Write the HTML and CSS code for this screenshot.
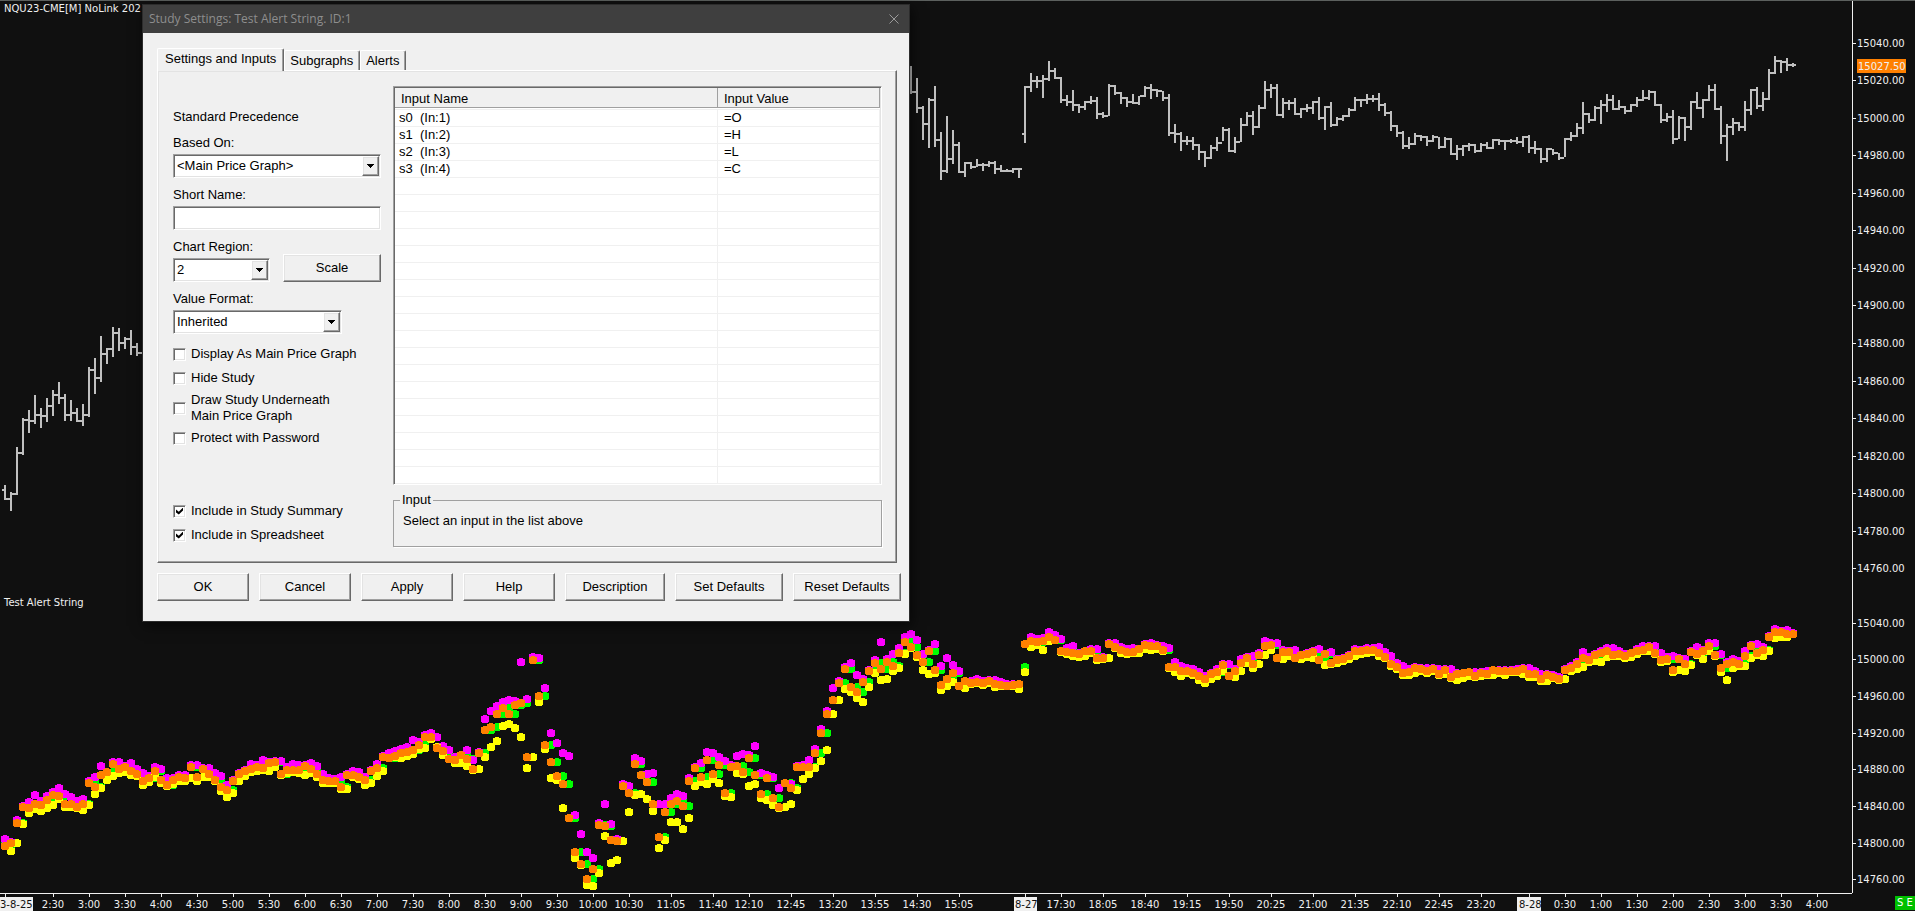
FILE: index.html
```html
<!DOCTYPE html>
<html lang="en">
<head>
<meta charset="utf-8">
<title>Study Settings</title>
<link rel="stylesheet" href="styles.css">
</head>
<body>
<main class="chart">
  <svg class="plot" id="plot" aria-label="Price and study chart"></svg>
  <svg class="price-axis" id="price-axis" aria-label="Price scale"></svg>
  <svg class="time-axis" id="time-axis" aria-label="Time scale"></svg>
  <div class="corner"><span class="status">S E</span></div>
</main>

<section class="dialog" role="dialog" aria-labelledby="dialog-title">
  <header class="titlebar">
    <h1 class="title" id="dialog-title">Study Settings: Test Alert String. ID:1</h1>
    <button class="close" type="button" aria-label="Close">
      <svg width="10" height="10" viewBox="0 0 10 10"><path d="M0.5 0.5 9.5 9.5M9.5 0.5 0.5 9.5" fill="none" stroke="#9a9a9a"/></svg>
    </button>
  </header>
  <form class="body">
    <div class="tabs" role="tablist">
      <button class="tab active" type="button" role="tab" aria-selected="true">Settings and Inputs</button>
      <button class="tab" type="button" role="tab" aria-selected="false">Subgraphs</button>
      <button class="tab" type="button" role="tab" aria-selected="false">Alerts</button>
    </div>
    <div class="panel" role="tabpanel">
      <div class="options">
        <p class="heading">Standard Precedence</p>
        <div class="field">
          <label for="based">Based On:</label>
          <div class="select"><select id="based"><option>&lt;Main Price Graph&gt;</option></select><span class="arrow"><svg width="7" height="4" viewBox="0 0 7 4" shape-rendering="crispEdges"><path d="M0 0h7v1H0zM1 1h5v1H1zM2 2h3v1H2zM3 3h1v1H3z"/></svg></span></div>
        </div>
        <div class="field">
          <label for="short">Short Name:</label>
          <input class="textbox" id="short" type="text">
        </div>
        <div class="field-row">
          <div class="field region">
            <label for="region">Chart Region:</label>
            <div class="select"><select id="region"><option>2</option></select><span class="arrow"><svg width="7" height="4" viewBox="0 0 7 4" shape-rendering="crispEdges"><path d="M0 0h7v1H0zM1 1h5v1H1zM2 2h3v1H2zM3 3h1v1H3z"/></svg></span></div>
          </div>
          <button class="button scale" type="button">Scale</button>
        </div>
        <div class="field format">
          <label for="format">Value Format:</label>
          <div class="select"><select id="format"><option>Inherited</option></select><span class="arrow"><svg width="7" height="4" viewBox="0 0 7 4" shape-rendering="crispEdges"><path d="M0 0h7v1H0zM1 1h5v1H1zM2 2h3v1H2zM3 3h1v1H3z"/></svg></span></div>
        </div>
        <div class="checks">
          <label class="check"><input type="checkbox">Display As Main Price Graph</label>
          <label class="check"><input type="checkbox">Hide Study</label>
          <label class="check tall"><input type="checkbox"><span>Draw Study Underneath<br>Main Price Graph</span></label>
          <label class="check"><input type="checkbox">Protect with Password</label>
        </div>
        <div class="checks includes">
          <label class="check"><input type="checkbox" checked>Include in Study Summary</label>
          <label class="check"><input type="checkbox" checked>Include in Spreadsheet</label>
        </div>
      </div>
      <div class="inputs">
        <div class="list">
          <table class="grid">
            <colgroup><col class="name-col"><col></colgroup>
            <thead><tr><th scope="col"><span>Input Name</span></th><th scope="col"><span>Input Value</span></th></tr></thead>
            <tbody id="rows">
              <tr><td>s0  (In:1)</td><td>=O</td></tr>
              <tr><td>s1  (In:2)</td><td>=H</td></tr>
              <tr><td>s2  (In:3)</td><td>=L</td></tr>
              <tr><td>s3  (In:4)</td><td>=C</td></tr>
            </tbody>
          </table>
        </div>
        <fieldset class="hint">
          <legend>Input</legend>
          <p>Select an input in the list above</p>
        </fieldset>
      </div>
    </div>
    <div class="actions">
      <button class="button" type="button">OK</button>
      <button class="button" type="button">Cancel</button>
      <button class="button" type="button">Apply</button>
      <button class="button" type="button">Help</button>
      <button class="button medium" type="button">Description</button>
      <button class="button wide" type="button">Set Defaults</button>
      <button class="button wide" type="button">Reset Defaults</button>
    </div>
  </form>
</section>
<script src="chart.js"></script>
</body>
</html>
```
FILE: styles.css
```css
* { box-sizing: border-box; }

body {
  margin: 0;
  height: 100vh;
  overflow: hidden;
  background: #101010;
  font-family: "Liberation Sans", Arial, sans-serif;
  font-size: 13px;
  line-height: 16px;
  color: #000;
}

h1, p { margin: 0; font-size: inherit; font-weight: normal; }

.chart {
  display: grid;
  grid-template-columns: 1fr 63px;
  grid-template-rows: 1fr 18px;
  height: 100%;
  border-top: 1px solid #5c605e;
  font-family: "DejaVu Sans", Verdana, sans-serif;
  font-size: 10px;
}

.chart svg { display: block; width: 100%; height: 100%; overflow: hidden; }
.chart text { fill: #f0f0f0; }
.chart .dark { fill: #101010; }
.price-axis { border-left: 1px solid #f0f0f0; }
.time-axis { border-top: 1px solid #f0f0f0; }

.corner { display: flex; justify-content: flex-end; align-items: flex-end; padding-bottom: 1px; }
.status {
  width: 20px;
  height: 14px;
  line-height: 14px;
  text-align: center;
  white-space: nowrap;
  background: #00c000;
  color: #fff;
}

.dialog {
  position: absolute;
  left: 142px;
  top: 4px;
  width: 768px;
  border: 1px solid #2c2c2c;
  background: #f0f0f0;
  box-shadow: 2px 4px 12px rgba(0, 0, 0, 0.6);
}

.titlebar {
  display: flex;
  align-items: center;
  justify-content: space-between;
  height: 28px;
  padding: 0 10px 0 6px;
  background: #3f3f3f;
}
.title { font: 12px/16px "Open Sans", "Noto Sans", sans-serif; color: #8e8e8e; }
.close { display: flex; padding: 0; border: 0; background: none; }

.body { padding: 15px 8px 20px 14px; }

.tabs { display: flex; align-items: flex-end; height: 22px; }
.tab {
  height: 20px;
  padding: 0 6px 0 5px;
  border: 1px solid #fff;
  border-right-color: #696969;
  border-bottom: 0;
  border-radius: 2px 2px 0 0;
  box-shadow: inset -1px 0 #a0a0a0;
  background: #f0f0f0;
  font: inherit;
  line-height: 18px;
  color: #000;
}
.tab.active {
  position: relative;
  z-index: 1;
  height: 23px;
  margin-bottom: -1px;
  padding: 0 7px 3px;
}

.panel {
  display: grid;
  grid-template-columns: 208px 1fr;
  gap: 12px;
  margin-right: 4px;
  padding: 15px 14px 15px 15px;
  border: 1px solid #fff;
  border-right-color: #696969;
  border-bottom-color: #696969;
  box-shadow: inset -1px -1px #a0a0a0, inset 1px 1px #e3e3e3;
}

.options { display: flex; flex-direction: column; gap: 9px; padding-bottom: 4px; }
.heading { margin: 23px 0 1px; }
.field { display: flex; flex-direction: column; gap: 3px; }
.field-row { display: flex; align-items: flex-end; justify-content: space-between; }
.region { width: 97px; }
.format { width: 169px; }

.select, .textbox, .list {
  border: 1px solid #fff;
  border-top-color: #a0a0a0;
  border-left-color: #a0a0a0;
  box-shadow: inset 1px 1px #696969, inset -1px -1px #e3e3e3;
  background: #fff;
}
.select { position: relative; height: 24px; padding: 1px; }
.select select {
  width: 100%;
  height: 100%;
  padding: 0 20px 0 2px;
  border: 0;
  appearance: none;
  background: none;
  font: inherit;
  color: #000;
}
.arrow {
  position: absolute;
  top: 1px;
  right: 1px;
  bottom: 1px;
  display: flex;
  align-items: center;
  justify-content: center;
  width: 17px;
  pointer-events: none;
}
.textbox { width: 100%; height: 24px; padding: 1px 4px; font: inherit; }

.button, .arrow {
  border: 1px solid #fff;
  border-right-color: #696969;
  border-bottom-color: #696969;
  box-shadow: inset -1px -1px #a0a0a0, inset 1px 1px #e3e3e3;
  background: #f0f0f0;
}
.button { width: 92px; height: 28px; padding: 0; font: inherit; color: #000; }
.scale { width: 98px; }
.medium { width: 100px; }
.wide { width: 108px; }

.checks { display: flex; flex-direction: column; gap: 8px; margin-top: 3px; }
.includes { margin-top: auto; }
.check { display: flex; align-items: center; gap: 5px; }
.tall { margin: -2px 0; }
.check input {
  flex: none;
  display: flex;
  width: 13px;
  height: 13px;
  margin: 0;
  appearance: none;
  border: 1px solid #fff;
  border-top-color: #a0a0a0;
  border-left-color: #a0a0a0;
  box-shadow: inset 1px 1px #696969, inset -1px -1px #e3e3e3;
  background: #fff;
}
.check input:checked::before {
  content: "";
  width: 7px;
  height: 7px;
  margin: 2px;
  background: #000;
  clip-path: polygon(0 28%, 40% 62%, 100% 0, 100% 43%, 40% 100%, 0 72%);
}

.inputs { display: flex; flex-direction: column; gap: 7px; }
.list { height: 399px; padding: 1px; overflow: hidden; }
.grid { width: 100%; border-collapse: separate; border-spacing: 0; table-layout: fixed; }
.name-col { width: 323px; }
.grid th { padding: 0; border-bottom: 1px solid #f0f0f0; font-weight: normal; text-align: left; }
.grid th span {
  display: block;
  height: 20px;
  margin-bottom: 1px;
  padding: 3px 6px 0;
  border-right: 1px solid #a0a0a0;
  border-bottom: 1px solid #a0a0a0;
  background: #f0f0f0;
}
.grid td {
  height: 17px;
  padding: 0 4px;
  border-right: 1px solid #f0f0f0;
  border-bottom: 1px solid #f0f0f0;
  white-space: pre;
}
.grid td + td { padding-left: 6px; }

.hint {
  min-width: 0;
  height: 55px;
  margin: 0;
  padding: 5px 9px 0;
  border: 1px solid #a0a0a0;
  box-shadow: 1px 1px #fff;
}
.hint legend { padding: 0 2px; margin-left: -3px; }

.actions { display: flex; gap: 10px; margin-top: 10px; }
```
FILE: chart.js
```js
// Bars are [high, low, close] in thirds of a pixel below the run's top edge.
// Each bar opens where the one before it closed, unless a fourth value says otherwise.
const runs = [
  { pane: "upper", top: 310, bars: "526,570,567,540 546,602,552 411,554,430 325,434,329 300,369,334 255,341,315 294,353,318 264,335,289 240,318,254 216,282,264 252,332,314 270,332,310 294,335,332 282,347,315 171,320,180 144,251,205 78,215,132 115,162,117 52,140,69 55,122,99 80,116,87 60,134,110 99,137,129" },
  { pane: "lower", top: 590, bars: "549,585,573 557,576,563 532,560,543 537,578,570 563,588,585 563,582,570 556,574,562 555,572,563 526,563,531 526,574,562 535,560,537 535,562,552 550,574,570 558,602,590 586,620,599 570,610,573 550,573,552 541,558,543 522,546,537 525,544,532 511,540,535 515,542,520 513,532,517 514,555,552 532,550,540 522,546,540 525,548,540 524,554,528 519,548,537 528,562,552 553,578,571 565,578,574 567,580,574 561,598,591 552,597,555 544,560,555 546,568,560 562,584,570 540,578,543 522,557,535 498,544,501 490,504,503 483,500,498 478,505,489 471,498,486 450,492,480 455,478,464 435,474,440 429,448,441 441,472,474 468,495,483 480,508,508 500,518,510 494,520,495 481,528,508 510,540,537 486,538,489" },
  { pane: "lower", top: 620, bars: "297,411,329 273,381,322 257,363,281 246,317,264 240,312,281 243,323,256 126,351,249 237,444,411 110,411,120 115,246,228 204,386,376 339,474,426 369,480,468 399,564,491 408,594,594 585,714,696 642,735,732 696,794,777 714,798,747 608,758,615 552,648,617 612,729,660 656,720,663 492,662,498 498,576,519 414,524,432 423,523,465 461,537,486 459,573,552 552,684,651 551,660,576 534,606,552 522,606,544 528,627,558 473,594,483 440,498,444 429,486,471 396,491,420 399,478,462 412,489,435 423,528,519 434,531,440 408,458,438 402,462,456 406,497,414 378,492,465 459,534,522 466,541,474 471,555,534 504,563,561 488,560,489 491,552,504 438,510,440 436,477,441 420,461,441 386,444,399 327,423,339 273,390,282 204,282,240 183,240,188 141,207,147" },
  { pane: "lower", top: 610, bars: "159,245,231 195,264,246 206,276,216 180,231,183 150,190,158 96,209,177 147,207,155 132,183,168 114,174,129 80,131,96" },
  { pane: "upper", top: 30, bars: "108,192,186 144,249,235 228,330,282 205,354,210 168,350,331 306,450,423 258,429,387 300,402,345 336,430,427 396,440,399 396,417,411 387,411,405 399,423,406 393,411,399 393,432,417 405,425,422 417,426,424 414,428,418 414,444,417 168,339,171,312 129,186,153 138,174,154 135,204,148 93,153,123 114,147,144 141,218,210 195,228,216 180,243,226 222,249,232 213,240,215 198,222,212 201,267,252 246,264,258 162,258,168 165,195,189 186,222,204 201,231,216 192,222,220 198,225,199 168,201,173 162,207,181 177,201,183 183,213,205 192,318,308 282,339,313 306,363,333 318,345,332 321,360,345 342,390,367 363,411,384 345,387,355 321,363,339 291,333,300 294,366,363 321,369,336 264,336,284 246,288,258 243,315,290 225,294,235 153,237,180 162,204,173 162,258,256 204,264,219 210,240,220 204,255,252 234,264,236 222,246,233 213,252,217 201,270,265 228,300,230 216,291,286 261,288,266 255,273,259 234,261,240 201,243,209 207,231,211 192,222,206 195,216,206 189,243,224 219,258,249 243,303,289 285,321,309 303,357,348 321,357,341 309,345,318 315,333,321 318,348,333 315,336,321 321,357,351 321,354,326 324,375,372 345,390,356 345,378,347 339,363,344 342,369,363 339,366,345 336,357,353 327,357,330 327,345,333 330,360,334 327,340,332 321,342,337 318,351,320 315,369,354 333,372,356 354,399,387 354,396,357 357,375,370 369,390,385 324,381,327 306,333,317 279,321,294 216,312,252 249,279,270 228,273,234 210,282,226 192,246,209 195,240,236 210,240,232 228,252,244 222,246,226 201,231,211 180,213,203 180,210,185 183,228,225 222,279,269 249,276,260 240,342,326 258,328,264 261,333,292 213,300,216 186,237,233 207,264,210 165,213,181 162,240,236 228,342,317 282,393,292 264,315,280 276,303,291 213,303,240 177,255,180 171,237,227 186,243,207 117,210,128 78,132,93 90,129,96 84,123,106 99,110,105" }
];

// Pixel row of 15040.00 and pixels per point, for each pane.
const panes = {
  upper: { zero: 42.7, perPoint: 1.877 },
  lower: { zero: 622.7, perPoint: 0.9165 }
};
const toPrice = (pane, y) => 15040 - (y - panes[pane].zero) / panes[pane].perPoint;
// The plot starts below the 1px window edge.
const toY = (pane, price) => Math.round(panes[pane].zero + (15040 - price) * panes[pane].perPoint) - 1;

const bars = [];
for (const run of runs) {
  for (const item of run.bars.split(" ")) {
    const [high, low, close, open] = item.split(",").map(v => toPrice(run.pane, run.top + v / 3));
    const before = bars.length ? bars[bars.length - 1].close : close;
    bars.push({ high, low, close, open: open === undefined ? before : open });
  }
}

const barX = i => 5 + 6 * i;
let ohlc = "";
bars.forEach((bar, i) => {
  const x = barX(i) - 1;
  const top = toY("upper", bar.high), bottom = toY("upper", bar.low);
  ohlc += `M${x} ${top}h2V${Math.max(bottom, top + 2)}h-2z`;
  ohlc += `M${x - 2} ${toY("upper", bar.open) - 1}h2v2h-2z`;
  ohlc += `M${x + 2} ${toY("upper", bar.close) - 1}h2v2h-2z`;
});

const dots = (key, color) => {
  const d = bars.map((bar, i) =>
    `M${barX(i) - 2} ${toY("lower", bar[key]) - 4}h4v1h2v6h-1v1h-6v-1h-1v-6h2z`).join("");
  return `<path fill="${color}" d="${d}"/>`;
};

document.getElementById("plot").innerHTML =
  `<g shape-rendering="crispEdges"><path fill="#c0c0c0" d="${ohlc}"/>` +
  dots("open", "#00ff00") + dots("high", "#ff00ff") + dots("low", "#ffff00") + dots("close", "#ff8000") +
  `</g><text x="4" y="11">NQU23-CME[M] NoLink 202</text><text x="4" y="605">Test Alert String</text>`;

let scale = "";
const mark = (pane, price) => {
  const y = toY(pane, price);
  scale += `<path fill="#f0f0f0" d="M0 ${y}h3v1h-3z"/><text x="4" y="${y + 4}">${price.toFixed(2)}</text>`;
};
for (let p = 15040; p >= 14760; p -= 20) mark("upper", p);
for (let p = 15040; p >= 14760; p -= 40) mark("lower", p);
scale += `<rect x="4" y="58" width="49" height="14" fill="#ff8000"/><text x="5" y="69">15027.50</text>`;
document.getElementById("price-axis").innerHTML = scale;

const times = "53 2:30,89 3:00,125 3:30,161 4:00,197 4:30,233 5:00,269 5:30,305 6:00,341 6:30,377 7:00,413 7:30,449 8:00,485 8:30,521 9:00,557 9:30,593 10:00,629 10:30,671 11:05,713 11:40,749 12:10,791 12:45,833 13:20,875 13:55,917 14:30,959 15:05,1061 17:30,1103 18:05,1145 18:40,1187 19:15,1229 19:50,1271 20:25,1313 21:00,1355 21:35,1397 22:10,1439 22:45,1481 23:20,1565 0:30,1601 1:00,1637 1:30,1673 2:00,1709 2:30,1745 3:00,1781 3:30,1817 4:00";
let axis = "";
for (const item of times.split(",")) {
  const [x, label] = item.split(" ");
  axis += `<path fill="#f0f0f0" d="M${x} 0h1v3h-1z"/><text x="${x}" y="14" text-anchor="middle">${label}</text>`;
}
for (const [x, left, width, start, label] of [[5, 0, 33, 0, "3-8-25"], [1025, 1014, 23, 1015, "8-27"], [1529, 1517, 24, 1519, "8-28"]]) {
  axis += `<path fill="#f0f0f0" d="M${x} 0h1v3h-1z"/><rect x="${left}" y="3" width="${width}" height="14" fill="#f0f0f0"/>` +
    `<text class="dark" x="${start}" y="14">${label}</text>`;
}
document.getElementById("time-axis").innerHTML = axis;

// The input list shows empty ruled rows below its entries.
document.getElementById("rows").insertAdjacentHTML("beforeend", "<tr><td></td><td></td></tr>".repeat(18));
```
